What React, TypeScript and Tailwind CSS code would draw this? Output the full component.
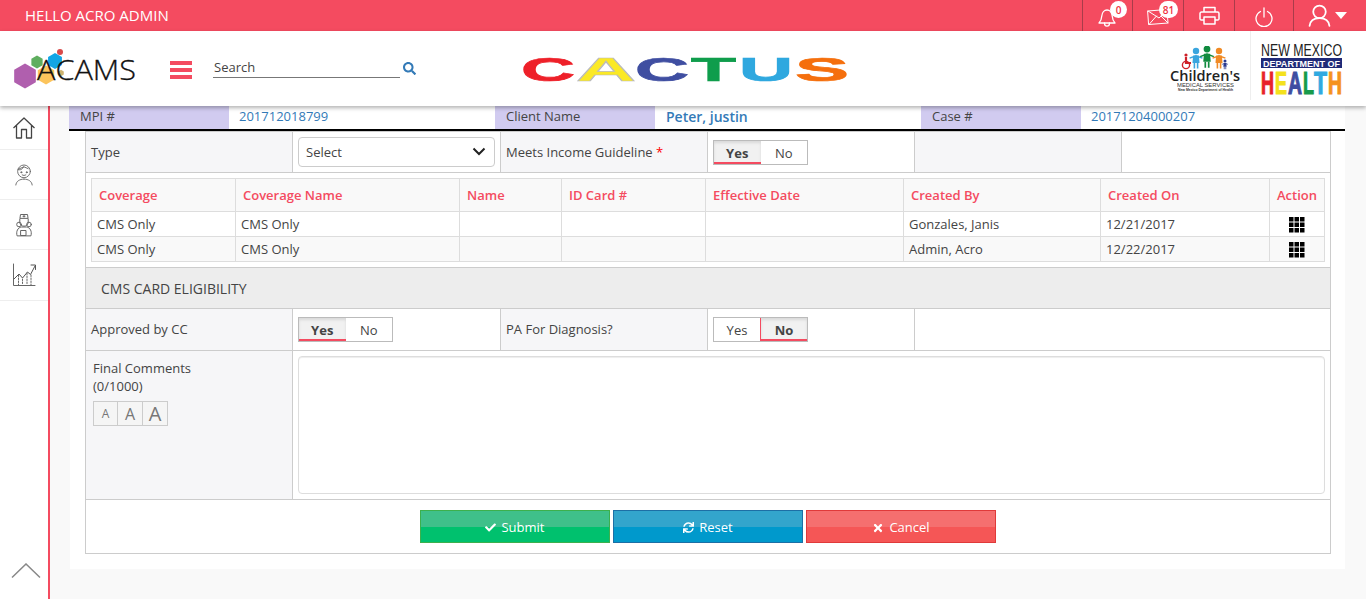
import React from "react";
import { FaSearch, FaCheck, FaSync, FaTimes } from "react-icons/fa";

const Hex = ({ cx, cy, r, fill }: { cx: number; cy: number; r: number; fill: string }) => {
  const h = r * 0.866;
  const pts = `${cx},${cy - r} ${cx + h},${cy - r / 2} ${cx + h},${cy + r / 2} ${cx},${cy + r} ${cx - h},${cy + r / 2} ${cx - h},${cy - r / 2}`;
  return <polygon points={pts} fill={fill} />;
};

const AcamsLogo = () => (
  <svg width="140" height="75" viewBox="0 31 140 75" className="shrink-0">
    <Hex cx={25} cy={76} r={12.5} fill="#b05fae" />
    <Hex cx={37} cy={62} r={6.5} fill="#5fae5f" />
    <Hex cx={55} cy={61} r={8} fill="#12a5e5" />
    <Hex cx={46} cy={75} r={9.5} fill="#fcc45c" />
    <Hex cx={61} cy={73} r={3.2} fill="#cdb26f" />
    <circle cx={60} cy={52} r={3} fill="#d84a4a" />
    <text x={37} y={80} fontFamily="'Open Sans',sans-serif" fontWeight="300" fontSize="28" fill="#111" stroke="#111" strokeWidth="0.3" textLength="99" lengthAdjust="spacingAndGlyphs">ACAMS</text>
  </svg>
);

const CactusLogo = () => {
  const L: [string, number, number, string, string][] = [
    ["C", 521, 54, "#ee2029", "#ee2029"],
    ["A", 576, 60, "#fbe925", "#bbb"],
    ["C", 635, 54, "#3f4ea1", "#3f4ea1"],
    ["T", 691, 45, "#0f9d4c", "#0f9d4c"],
    ["U", 739, 54, "#2fa8df", "#2fa8df"],
    ["S", 795, 54, "#f56f0d", "#f56f0d"],
  ];
  return (
    <svg width="338" height="48" viewBox="516 45 338 48" className="shrink-0">
      {L.map(([c, x, w, f, s], i) => (
        <text key={i} x={x} y={80.5} fontFamily="'Liberation Sans',sans-serif" fontWeight="700" fontSize="32.5" fill={f} stroke={s} strokeWidth="0.7" textLength={w} lengthAdjust="spacingAndGlyphs">{c}</text>
      ))}
    </svg>
  );
};

const Kid = ({ x, y, s, c }: { x: number; y: number; s: number; c: string }) => (
  <g fill={c} stroke={c}>
    <circle cx={x} cy={y} r={s * 0.2} stroke="none" />
    <path d={`M${x - s * 0.4} ${y + s * 0.45} L${x} ${y + s * 0.3} L${x + s * 0.4} ${y + s * 0.45}`} fill="none" strokeWidth={s * 0.09} />
    <path d={`M${x - s * 0.18} ${y + s * 0.28} L${x + s * 0.18} ${y + s * 0.28} L${x + s * 0.22} ${y + s * 0.75} L${x - s * 0.22} ${y + s * 0.75}Z`} stroke="none" />
    <path d={`M${x - s * 0.1} ${y + s * 0.75} V${y + s * 1.1} M${x + s * 0.1} ${y + s * 0.75} V${y + s * 1.1}`} fill="none" strokeWidth={s * 0.1} />
  </g>
);

const ChildrensLogo = () => (
  <svg width="74" height="46" viewBox="1169 45 74 46" className="shrink-0">
    <circle cx={1186} cy={54} r={1.6} fill="#ce2029" />
    <path d="M1186 56v6h5" stroke="#ce2029" strokeWidth="2.2" fill="none" />
    <circle cx={1186} cy={64} r={3.6} fill="none" stroke="#ce2029" strokeWidth="1.4" />
    <Kid x={1196} y={50} s={16} c="#3aa5de" />
    <Kid x={1207} y={48} s={17} c="#108a3e" />
    <Kid x={1219} y={50} s={16} c="#f08a24" />
    <Kid x={1225} y={60} s={7.5} c="#2b3a8f" />
    <text x={1170} y={80} fontFamily="'Open Sans',sans-serif" fontWeight="600" fontSize="14" fill="#222" textLength="70" lengthAdjust="spacingAndGlyphs">Children's</text>
    <text x={1177} y={85.5} fontFamily="'Liberation Sans',sans-serif" fontSize="4.5" fill="#333" textLength="57" lengthAdjust="spacingAndGlyphs">MEDICAL SERVICES</text>
    <text x={1178} y={89.5} fontFamily="'Liberation Sans',sans-serif" fontSize="3" fontWeight="700" fill="#333" textLength="55" lengthAdjust="spacingAndGlyphs">New Mexico Department of Health</text>
  </svg>
);

const HealthLogo = () => {
  const L: [string, number, number, string][] = [
    ["H", 1261, 13, "#e8212b"],
    ["E", 1275, 12, "#f4e11c"],
    ["A", 1288, 14, "#3f4ea1"],
    ["L", 1303, 11, "#179a4b"],
    ["T", 1314, 13, "#30a9e0"],
    ["H", 1328, 14, "#f5921e"],
  ];
  return (
    <svg width="96" height="62" viewBox="1260 35 96 62" className="shrink-0">
      <text x={1261} y={53} fontFamily="'Liberation Sans',sans-serif" fontSize="17" fill="#222" textLength="81" lengthAdjust="spacingAndGlyphs">NEW MEXICO</text>
      <rect x={1261} y={55} width={81} height={10} fill="#1f2a78" />
      <text x={1263} y={63.5} fontFamily="'Liberation Sans',sans-serif" fontWeight="700" fontSize="9.5" fill="#fff" textLength="77" lengthAdjust="spacingAndGlyphs">DEPARTMENT OF</text>
      {L.map(([c, x, w, f], i) => (
        <text key={i} x={x} y={90.5} fontFamily="'Liberation Sans',sans-serif" fontWeight="700" fontSize="32" fill={f} stroke={f} strokeWidth="1.2" textLength={w} lengthAdjust="spacingAndGlyphs">{c}</text>
      ))}
    </svg>
  );
};

const Badge = ({ n, cls }: { n: string; cls: string }) => (
  <span className={`absolute flex items-center justify-center rounded-full bg-white text-[#f0323f] text-[10px] font-semibold leading-none ${cls}`}>{n}</span>
);

const TopIcon = ({ w, children }: { w: string; children: React.ReactNode }) => (
  <div className={`relative h-full flex items-center justify-center border-l border-[#a83c4a] shrink-0 ${w}`}>{children}</div>
);

const stroke = { fill: "none", stroke: "#fff", strokeWidth: 1.3, strokeLinecap: "round" as const, strokeLinejoin: "round" as const };

const TopBar = () => (
  <div className="h-[31px] bg-[#f44b60] flex items-center shrink-0">
    <div className="pl-[25px] text-white text-[15px]">HELLO ACRO ADMIN</div>
    <div className="ml-auto h-full flex">
      <TopIcon w="w-[50px]">
        <svg width="22" height="22" viewBox="0 0 22 22" {...stroke} className="-ml-[2px] mt-[2px]">
          <path d="M3 17c2-2 2.500-3 2.800-7 .3-3.500 2.500-6 5.200-6s4.900 2.500 5.200 6c.3 4 .8 5 2.800 7z" />
          <path d="M8.500 17c0 2 1 3.200 2.500 3.200s2.500-1.200 2.500-3.200" />
        </svg>
        <Badge n="0" cls="w-[17px] h-[17px] left-[27px] top-[1px]" />
      </TopIcon>
      <TopIcon w="w-[51px]">
        <svg width="24" height="20" viewBox="0 0 24 20" {...stroke} strokeWidth={1} className="ml-[-1px] mt-[3px]">
          <path d="M2 4l19 -1.500 1 13.500-19 1.500z" />
          <path d="M2 4l11 7 9-8.500" />
          <path d="M3 17.500l7.500-8.500M22 16l-7-7" />
        </svg>
        <Badge n="81" cls="w-[19px] h-[17px] left-[26px] top-[1px]" />
      </TopIcon>
      <TopIcon w="w-[51px]">
        <svg width="21" height="19" viewBox="0 0 21 19" fill="none" stroke="#fff" strokeWidth="1.500" strokeLinejoin="round">
          <path d="M5 6V1.500h11V6" />
          <path d="M5 14H2a1.200 1.200 0 0 1-1-1V7.500A1.500 1.500 0 0 1 2.500 6h16A1.500 1.500 0 0 1 20 7.500V13a1.200 1.200 0 0 1-1 1h-3" />
          <path d="M5 11h11v7H5z" />
        </svg>
      </TopIcon>
      <TopIcon w="w-[59px]">
        <svg width="18" height="20" viewBox="0 0 18 20" {...stroke} className="mt-[2px]">
          <path d="M5.500 4.500a8 8 0 1 0 7 0" />
          <path d="M9 1v9" />
        </svg>
      </TopIcon>
      <TopIcon w="w-[73px]">
        <svg width="23" height="23" viewBox="0 0 22 22" fill="none" stroke="#fff" strokeWidth="1.700" strokeLinecap="round" className="-ml-[6px]">
          <circle cx="11" cy="7.500" r="6" />
          <path d="M1.500 21c.5-5 4-7.500 9.500-7.500s9 2.500 9.500 7.500" />
        </svg>
        <svg width="12" height="7" viewBox="0 0 12 7" className="ml-[4px]"><path d="M0 0h12L6 7z" fill="#fff" /></svg>
      </TopIcon>
    </div>
  </div>
);

const Header = () => (
  <div className="relative z-10 h-[75px] bg-white flex items-center shrink-0 shadow-[0_2px_4px_rgba(0,0,0,0.3)]">
    <AcamsLogo />
    <div className="ml-[30px] mt-[3px] w-[22px] flex flex-col gap-[3px] shrink-0">
      <span className="h-[4px] bg-[#f44b60]" />
      <span className="h-[4px] bg-[#f44b60]" />
      <span className="h-[4px] bg-[#f44b60]" />
    </div>
    <div className="ml-[21px] w-[187px] border-b border-[#777] h-[21px] text-[13px] leading-[20px] text-[#444] pl-[1px] mb-[2px] shrink-0">Search</div>
    <FaSearch className="ml-[3px] mb-[1px] text-[#337ab7] text-[13px] shrink-0" />
    <div className="ml-[100px]"><CactusLogo /></div>
    <div className="ml-auto flex items-center h-full">
      <ChildrensLogo />
      <div className="ml-[7px] h-[69px] mb-[6px] border-l border-[#eee]" />
      <div className="ml-[9px] mr-[10px]"><HealthLogo /></div>
    </div>
  </div>
);

const SideBtn = ({ children, h }: { children: React.ReactNode; h: string }) => (
  <div className={`flex items-center justify-center border-b border-[#eee] ${h}`}>{children}</div>
);

const s2 = { fill: "none", stroke: "#666", strokeWidth: 1, strokeLinecap: "round" as const, strokeLinejoin: "round" as const };

const Sidebar = () => (
  <div className="w-[50px] shrink-0 bg-white border-r-2 border-[#f44b60] flex flex-col h-full">
    <SideBtn h="h-[44px]">
      <svg width="24" height="24" viewBox="0 0 24 24" fill="none" stroke="#444" strokeWidth="1.300" strokeLinejoin="round">
        <path d="M1.500 12L12 2l10.500 10M4.500 9.500V22H9.500V13.500H14.500V22H19.500V9.500" />
      </svg>
    </SideBtn>
    <SideBtn h="h-[50px]">
      <svg width="20" height="24" viewBox="0 0 22 24" {...s2}>
        <circle cx="11" cy="8" r="7" />
        <path d="M4.500 6c3 1 5-.5 6-3 M5 5.500l6-2.500 4.500 2" />
        <circle cx="8" cy="9" r=".6" fill="#555" />
        <circle cx="14" cy="9" r=".6" fill="#555" />
        <path d="M9 12q2 1.300 4 0" />
        <path d="M2 23c.3-4 4-6.500 9-6.500" />
        <path d="M20 23c-.3-4-4-6.500-9-6.500" />
      </svg>
    </SideBtn>
    <SideBtn h="h-[50px]">
      <svg width="18" height="24" viewBox="0 0 18 24" {...s2}>
        <path d="M5 5l.5-3.500h7L13 5z" />
        <path d="M8 3.300h2M9 2.500v1.600" />
        <path d="M4.800 6v3a4.200 4.200 0 0 0 8.400 0V6" />
        <circle cx="4" cy="11.500" r="2.300" />
        <circle cx="14" cy="11.500" r="2.300" />
        <path d="M2 22.500c-1.200-4 .8-8 4.500-8.500h5c3.700.5 5.700 4.500 4.500 8.500z" />
        <path d="M6 17.500h5v5H6z" />
      </svg>
    </SideBtn>
    <SideBtn h="h-[51px]">
      <svg width="24" height="24" viewBox="0 0 24 24" {...s2}>
        <path d="M1.500 1v21.500H23" />
        <path d="M2 16l5-5 3.500 4 5-6 3 2.500L23 3" stroke="#555" />
        <path d="M19 2h4.500v4.500" stroke="#555" />
        <path d="M6.500 12v10M10.500 16v6M15 10v12M19 12v10" strokeDasharray="1.500 1.500" />
      </svg>
    </SideBtn>
    <div className="mt-auto h-[36px] flex justify-center">
      <svg width="30" height="16" viewBox="0 0 30 16" fill="none" stroke="#888" strokeWidth="1.500" className="mr-[-4px]">
        <path d="M1 14.500L15 1 29 14.500" />
      </svg>
    </div>
  </div>
);

const InfoLabel = ({ children }: { children: React.ReactNode }) => (
  <div className="w-[160px] shrink-0 bg-[#d1cbf0] pl-[11px] pb-[2px] flex items-center text-[#444]">{children}</div>
);
const InfoValue = ({ w, children, bold }: { w: string; children: React.ReactNode; bold?: boolean }) => (
  <div className={`${w} flex items-center pb-[2px] text-[#337ab7] ${bold ? "pl-[11px] font-semibold text-[14px]" : "pl-[10px]"}`}>{children}</div>
);

const Toggle = ({ active }: { active: "Yes" | "No" }) => (
  <div className="flex h-[25px] w-[95px] border border-[#bbb] bg-white text-[13px] text-[#444]">
    {(["Yes", "No"] as const).map((t) => (
      <div
        key={t}
        className={
          t === active
            ? "flex-1 flex items-center justify-center pt-[5px] font-bold bg-[#f1f1f1] border-b-2 border-[#f44b60] shadow-[inset_0_2px_3px_rgba(0,0,0,0.1)]" + (t === "No" ? " border-l border-[#bbb]" : "")
            : "flex-1 flex items-center justify-center pt-[3px]"
        }
      >
        {t}
      </div>
    ))}
  </div>
);

const cols: [string, number][] = [
  ["Coverage", 144],
  ["Coverage Name", 224],
  ["Name", 102],
  ["ID Card #", 144],
  ["Effective Date", 198],
  ["Created By", 197],
  ["Created On", 169],
  ["Action", 55],
];
const rows = [
  ["CMS Only", "CMS Only", "", "", "", "Gonzales, Janis", "12/21/2017"],
  ["CMS Only", "CMS Only", "", "", "", "Admin, Acro", "12/22/2017"],
];

const GridIcon = () => (
  <svg width="16" height="16" viewBox="0 0 16 16" className="mx-auto" fill="#000">
    {[0, 5.500, 11].map((x) => [0, 5.500, 11].map((y) => <rect key={`${x}-${y}`} x={x} y={y} width="4.500" height="4.500" />))}
  </svg>
);

const Label = ({ children, cls = "" }: { children?: React.ReactNode; cls?: string }) => (
  <div className={`bg-[#f6f6f8] border-r border-[#ccc] flex items-center pl-[5px] ${cls}`}>{children}</div>
);
const Cell = ({ children, cls = "" }: { children?: React.ReactNode; cls?: string }) => (
  <div className={`bg-white border-r border-[#ccc] flex items-center pl-[5px] ${cls}`}>{children}</div>
);

const ActionBtn = ({ cls, top, icon, children }: { cls: string; top: string; icon: React.ReactNode; children: string }) => (
  <div className={`relative w-[190px] h-[33px] border flex items-center justify-center gap-[5px] text-white text-[13px] ${cls}`}>
    <div className={`absolute inset-x-0 top-0 h-[16px] ${top}`} />
    <span className="relative flex items-center gap-[5px] pt-[2px]">{icon}{children}</span>
  </div>
);

export default function App() {
  return (
    <div className="w-[1366px] h-[599px] overflow-hidden flex flex-col font-['Open_Sans',sans-serif] text-[13px] text-[#444]">
      <TopBar />
      <Header />
      <div className="flex-1 flex min-h-0">
        <Sidebar />
        <div className="flex-1 min-w-0 bg-[#f9f9f9] pl-[19px] pr-[21px]">
          <div className="flex h-[23px] bg-white">
            <InfoLabel>MPI #</InfoLabel>
            <InfoValue w="w-[266px]">201712018799</InfoValue>
            <InfoLabel>Client Name</InfoLabel>
            <InfoValue w="w-[266px]" bold>Peter, justin</InfoValue>
            <InfoLabel>Case #</InfoLabel>
            <InfoValue w="flex-1">20171204000207</InfoValue>
          </div>
          <div className="h-[2px] bg-black" />
          <div className="ml-[1px] bg-white pl-[15px] pr-[14px] pb-[15px]">
            <div className="border border-[#ccc]">
              <div className="grid grid-cols-[207px_208px_207px_207px_207px_1fr] h-[41px] border-b border-[#ccc]">
                <Label cls="pt-[1px]">Type</Label>
                <Cell>
                  <div className="w-[197px] h-[30px] border border-[#ccc] rounded-[4px] flex items-center justify-between pl-[7px] pr-[8px] -mt-[1px]">
                    <span className="pt-[2px]">Select</span>
                    <svg width="14" height="9" viewBox="0 0 14 9" fill="none" stroke="#222" strokeWidth="2"><path d="M1.500 1.500L7 7l5.500-5.500" /></svg>
                  </div>
                </Cell>
                <Label cls="pt-[1px]">Meets Income Guideline&nbsp;<span className="text-[#f00]">*</span></Label>
                <Cell><Toggle active="Yes" /></Cell>
                <Label />
                <Cell cls="border-r-0" />
              </div>
              <div className="p-[5px] border-b border-[#ccc]">
                <table className="table-fixed border-collapse w-[1233px]">
                  <colgroup>
                    {cols.map(([n, w]) => <col key={n} style={{ width: w }} />)}
                  </colgroup>
                  <thead>
                    <tr className="h-[33px] bg-[#f9f9f9]">
                      {cols.map(([n]) => (
                        <th key={n} className="border border-[#ddd] text-left font-semibold text-[13px] text-[#f44b60] pl-[7px] pt-[1px]">{n}</th>
                      ))}
                    </tr>
                  </thead>
                  <tbody>
                    {rows.map((r, i) => (
                      <tr key={i} className={`h-[25px] ${i === 1 ? "bg-[#f9f9f9]" : "bg-white"}`}>
                        {r.map((c, j) => (
                          <td key={j} className="border border-[#ddd] pl-[5px] pt-[1px]">{c}</td>
                        ))}
                        <td className="border border-[#ddd] pt-[1px]"><GridIcon /></td>
                      </tr>
                    ))}
                  </tbody>
                </table>
              </div>
              <div className="h-[41px] bg-[#ededed] border-b border-[#ccc] flex items-center pl-[15px] pt-[1px] text-[14px]">CMS CARD ELIGIBILITY</div>
              <div className="grid grid-cols-[207px_208px_207px_207px_1fr] h-[42px] border-b border-[#ccc]">
                <Label>Approved by CC</Label>
                <Cell><Toggle active="Yes" /></Cell>
                <Label>PA For Diagnosis?</Label>
                <Cell><Toggle active="No" /></Cell>
                <Cell cls="border-r-0" />
              </div>
              <div className="grid grid-cols-[207px_1fr] h-[149px] border-b border-[#ccc]">
                <div className="bg-[#f6f6f8] border-r border-[#ccc] pl-[7px] pt-[8px] leading-[18px]">
                  <div>Final Comments</div>
                  <div>(0/1000)</div>
                  <div className="mt-[6px] flex w-[75px] h-[25px] border border-[#ccc] bg-[#f5f5f5] text-[#777]">
                    <span className="w-[24px] border-r border-[#ccc] flex items-center justify-center text-[12px]">A</span>
                    <span className="w-[25px] border-r border-[#ccc] flex items-center justify-center text-[16px]">A</span>
                    <span className="flex-1 flex items-center justify-center text-[20px]">A</span>
                  </div>
                </div>
                <div className="bg-white pl-[5px] pr-[5px] pt-[5px]">
                  <div className="h-[138px] border border-[#ddd] rounded-[4px] shadow-[inset_0_1px_1px_rgba(0,0,0,0.075)]" />
                </div>
              </div>
              <div className="h-[53px] flex items-center justify-center gap-[3px]">
                <ActionBtn cls="bg-[#00c16e] border-[#3cb04d]" top="bg-[#3fc08a]" icon={<FaCheck className="text-[11px]" />}>Submit</ActionBtn>
                <ActionBtn cls="bg-[#0099cc] border-[#1d6fa5]" top="bg-[#33a5cc]" icon={<FaSync className="text-[11px]" />}>Reset</ActionBtn>
                <ActionBtn cls="bg-[#f55656] border-[#e03a3a]" top="bg-[#f56f6f]" icon={<FaTimes className="text-[12px]" />}>Cancel</ActionBtn>
              </div>
            </div>
          </div>
        </div>
      </div>
    </div>
  );
}
